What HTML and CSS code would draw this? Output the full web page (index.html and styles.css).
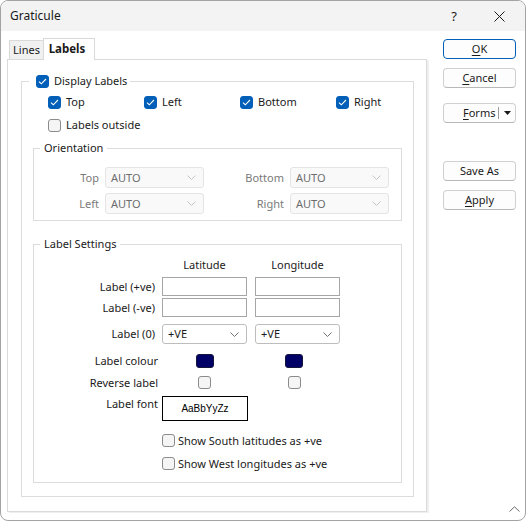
FILE: index.html
```html
<!DOCTYPE html>
<html lang="en">
  <head>
    <meta charset="UTF-8" />
    <meta name="viewport" content="width=device-width, initial-scale=1.0" />
    <title>Graticule</title>
    <link rel="stylesheet" href="styles.css">
  </head>

  <body>
    <div class="dialog">
      <div class="titlebar">
        <span class="title">Graticule</span>
        <span class="help">?</span>
        <span class="close">
          <svg width="11" height="11" viewBox="0 0 11 11"><path d="M0.5 0.5 L10.5 10.5 M10.5 0.5 L0.5 10.5" stroke="#1b1b1b" stroke-width="1" fill="none" /></svg>
        </span>
      </div>

      <div class="main">
        <div class="tabs">
          <div class="tab_strip">
            <span class="tab">Lines</span>
            <span class="tab active">Labels</span>
          </div>

          <div class="panel">
            <fieldset class="group outer">
              <legend>
                <span class="check on"><svg width="9" height="7" viewBox="0 0 9 7"><path d="M1 3.6 L3.3 5.8 L8 1" stroke="#fff" stroke-width="1.1" fill="none" /></svg></span>
                Display Labels
              </legend>

              <div class="opts">
                <label class="opt"><span class="check on"><svg width="9" height="7" viewBox="0 0 9 7"><path d="M1 3.6 L3.3 5.8 L8 1" stroke="#fff" stroke-width="1.1" fill="none" /></svg></span>Top</label>
                <label class="opt"><span class="check on"><svg width="9" height="7" viewBox="0 0 9 7"><path d="M1 3.6 L3.3 5.8 L8 1" stroke="#fff" stroke-width="1.1" fill="none" /></svg></span>Left</label>
                <label class="opt"><span class="check on"><svg width="9" height="7" viewBox="0 0 9 7"><path d="M1 3.6 L3.3 5.8 L8 1" stroke="#fff" stroke-width="1.1" fill="none" /></svg></span>Bottom</label>
                <label class="opt"><span class="check on"><svg width="9" height="7" viewBox="0 0 9 7"><path d="M1 3.6 L3.3 5.8 L8 1" stroke="#fff" stroke-width="1.1" fill="none" /></svg></span>Right</label>
              </div>
              <div class="opts">
                <label class="opt wide"><span class="check"></span>Labels outside</label>
              </div>

              <fieldset class="group inner orient">
                <legend>Orientation</legend>
                <div class="orient_grid">
                  <span class="dim_label">Top</span>
                  <div class="combo off"><span>AUTO</span><svg width="9" height="5" viewBox="0 0 9 5"><path d="M0.5 0.5 L4.5 4.5 L8.5 0.5" stroke="#c4c4c4" fill="none" /></svg></div>
                  <span class="dim_label">Bottom</span>
                  <div class="combo off"><span>AUTO</span><svg width="9" height="5" viewBox="0 0 9 5"><path d="M0.5 0.5 L4.5 4.5 L8.5 0.5" stroke="#c4c4c4" fill="none" /></svg></div>
                  <span class="dim_label">Left</span>
                  <div class="combo off"><span>AUTO</span><svg width="9" height="5" viewBox="0 0 9 5"><path d="M0.5 0.5 L4.5 4.5 L8.5 0.5" stroke="#c4c4c4" fill="none" /></svg></div>
                  <span class="dim_label">Right</span>
                  <div class="combo off"><span>AUTO</span><svg width="9" height="5" viewBox="0 0 9 5"><path d="M0.5 0.5 L4.5 4.5 L8.5 0.5" stroke="#c4c4c4" fill="none" /></svg></div>
                </div>
              </fieldset>

              <fieldset class="group inner settings">
                <legend>Label Settings</legend>

                <div class="ls_row head">
                  <span class="lbl"></span>
                  <span class="cell lat">Latitude</span>
                  <span class="cell lon">Longitude</span>
                </div>
                <div class="ls_row r_pos">
                  <span class="lbl">Label (+ve)</span>
                  <input class="cell lat txt" type="text" />
                  <input class="cell lon txt" type="text" />
                </div>
                <div class="ls_row r_neg">
                  <span class="lbl">Label (-ve)</span>
                  <input class="cell lat txt" type="text" />
                  <input class="cell lon txt" type="text" />
                </div>
                <div class="ls_row r_zero">
                  <span class="lbl">Label (0)</span>
                  <div class="cell lat combo"><span>+VE</span><svg width="9" height="5" viewBox="0 0 9 5"><path d="M0.5 0.5 L4.5 4.5 L8.5 0.5" stroke="#707070" fill="none" /></svg></div>
                  <div class="cell lon combo"><span>+VE</span><svg width="9" height="5" viewBox="0 0 9 5"><path d="M0.5 0.5 L4.5 4.5 L8.5 0.5" stroke="#707070" fill="none" /></svg></div>
                </div>
                <div class="ls_row tight r_colour">
                  <span class="lbl">Label colour</span>
                  <span class="cell lat mid"><span class="swatch"></span></span>
                  <span class="cell lon mid"><span class="swatch"></span></span>
                </div>
                <div class="ls_row tight r_reverse">
                  <span class="lbl">Reverse label</span>
                  <span class="cell lat mid"><span class="check small"></span></span>
                  <span class="cell lon mid"><span class="check small"></span></span>
                </div>
                <div class="ls_row tight r_font">
                  <span class="lbl">Label font</span>
                  <span class="cell lat font_box">AaBbYyZz</span>
                </div>
                <label class="ls_check r_south"><span class="check small"></span>Show South latitudes as +ve</label>
                <label class="ls_check r_west"><span class="check small"></span>Show West longitudes as +ve</label>
              </fieldset>
            </fieldset>
          </div>
        </div>

        <div class="buttons">
          <button class="btn default"><u>O</u>K</button>
          <button class="btn cancel"><u>C</u>ancel</button>
          <div class="btn split">
            <span class="split_text"><u>F</u>orms</span>
            <span class="split_arrow"><svg width="7" height="4" viewBox="0 0 7 4"><path d="M0 0 L7 0 L3.5 4 Z" fill="#1b1b1b" /></svg></span>
          </div>
          <button class="btn save">Save As</button>
          <button class="btn apply"><u>A</u>pply</button>
        </div>
      </div>

      <svg class="grip" width="11" height="6" viewBox="0 0 11 6"><path d="M0.5 5.5 L5.5 0.8 L10.5 5.5" stroke="#6a6a6a" fill="none" /></svg>
    </div>
  </body>
</html>
```

FILE: styles.css
```css
* {
  margin: 0;
  padding: 0;
  box-sizing: border-box;
}

body {
  background: #fff;
  font-family: "Noto Sans", "Open Sans", sans-serif;
  font-size: 11px;
  line-height: 16px;
  color: #1a1a1a;
}

.dialog {
  position: relative;
  width: 526px;
  height: 521px;
  border: 1px solid #a3a3a3;
  border-radius: 8px;
  background: #fff;
  overflow: hidden;
}

/* title bar */
.titlebar {
  display: flex;
  align-items: center;
  height: 30px;
  padding-left: 9px;
  background: #f3f3f3;
}

.title {
  flex: 1;
  font-size: 12px;
}

.help {
  width: 20px;
  text-align: center;
  font-size: 13px;
}

.close {
  display: flex;
  justify-content: center;
  width: 20px;
  margin: 0 16px 0 25px;
}

/* body */
.main {
  display: flex;
}

.tabs {
  margin-left: 6px;
}

.tab_strip {
  display: flex;
  align-items: flex-end;
  height: 28px;
  padding-left: 2px;
}

.tab {
  height: 19px;
  border: 1px solid #d9d9d9;
  border-bottom: none;
  background: #f0f0f0;
  text-align: center;
  line-height: 18px;
}

.tab:first-child {
  width: 35px;
}

.tab.active {
  position: relative;
  z-index: 1;
  width: 52px;
  height: 22px;
  margin-left: -1px;
  margin-bottom: -1px;
  padding-right: 4px;
  background: #fff;
  font-size: 11.5px;
  font-weight: 700;
  line-height: 20px;
}

.panel {
  width: 420px;
  height: 453px;
  padding: 13px 0 0 13px;
  border: 1px solid #dadada;
  background: #fff;
  box-shadow: 2px 1px 0 #efefef;
}

/* group boxes */
.group {
  border: 1px solid #dcdcdc;
  min-width: 0;
}

.group legend {
  height: 16px;
  line-height: 16px;
}

.outer {
  width: 393px;
  padding: 0 0 13px;
}

.outer > legend {
  display: flex;
  align-items: center;
  gap: 5px;
  margin-left: 7px;
  padding: 0 3px 0 7px;
}

.inner {
  margin: 0 11px;
}

.inner > legend {
  margin-left: 6px;
  padding: 0 4px;
}

.check {
  display: inline-flex;
  align-items: center;
  justify-content: center;
  flex: none;
  width: 13px;
  height: 13px;
  border: 1px solid #8b8b8b;
  border-radius: 3px;
  background: #f5f5f5;
}

.check.on {
  border-color: #005fb8;
  background: #005fb8;
}

.check.small {
  width: 13px;
  height: 13px;
}

.opts {
  display: flex;
  height: 20px;
  margin-top: 3px;
  padding-left: 26px;
}

.opt {
  display: flex;
  align-items: center;
  flex: none;
  gap: 5px;
  width: 96px;
}

.opt.wide {
  width: auto;
}

/* orientation */
.orient {
  margin-top: 5px;
  padding: 11px 0 6px;
}

.orient_grid {
  display: grid;
  grid-template-columns: 65px 99px 74px 99px;
  grid-auto-rows: 21px;
  column-gap: 6px;
  row-gap: 5px;
}

.dim_label {
  align-self: center;
  text-align: right;
  color: #7a7a7a;
}

.combo {
  display: flex;
  align-items: center;
  justify-content: space-between;
  height: 20px;
  padding: 0 7px 0 5px;
  border: 1px solid #bdbdbd;
  border-radius: 3px;
  background: #fff;
}

.combo.off {
  height: 21px;
  border-color: #e4e4e4;
  background: #f9f9f9;
  color: #6d6d6d;
}

/* label settings */
.settings {
  margin-top: 15px;
  padding: 0 0 12px;
}

.ls_row {
  display: flex;
  align-items: center;
}

.lbl {
  width: 121px;
  flex: none;
  text-align: right;
}

.cell {
  width: 85px;
  flex: none;
}

.cell.lat {
  margin-left: 7px;
}

.cell.lon {
  margin-left: 8px;
}

.tight .lbl {
  width: 124px;
}

.tight .cell.lat {
  margin-left: 4px;
}

.head {
  height: 16px;
  margin-top: 5px;
}

.head .cell {
  text-align: center;
}

.txt {
  height: 19px;
  border: 1px solid #a6a6a6;
  background: #fff;
  font: inherit;
  outline: none;
}

.r_pos {
  margin-top: 4px;
}

.r_neg {
  margin-top: 2px;
}

.r_zero {
  margin-top: 7px;
}

.mid {
  display: flex;
  justify-content: center;
}

.cell.lon.mid {
  padding-right: 7px;
}

.r_colour {
  height: 14px;
  margin-top: 10px;
}

.swatch {
  width: 18px;
  height: 14px;
  border: 1px solid #14143c;
  border-radius: 3px;
  background: #000066;
}

.r_reverse {
  height: 13px;
  margin-top: 8px;
}

.r_font {
  align-items: flex-start;
  height: 25px;
  margin-top: 7px;
}

.font_box {
  width: 86px;
  height: 25px;
  border: 1px solid #000;
  background: #fff;
  font-family: "Liberation Sans", Arial, sans-serif;
  font-size: 10px;
  line-height: 23px;
  text-align: center;
  color: #000;
}

.ls_check {
  display: flex;
  align-items: center;
  gap: 3px;
  height: 13px;
  padding-left: 128px;
}

.r_south {
  margin-top: 13px;
}

.r_west {
  margin-top: 10px;
}

/* buttons */
.buttons {
  display: flex;
  flex-direction: column;
  width: 73px;
  margin-left: 16px;
  padding-top: 8px;
}

.btn {
  height: 20px;
  border: 1px solid #d0d0d0;
  border-bottom-color: #b8b8b8;
  border-radius: 4px;
  background: #fdfdfd;
  font: inherit;
  color: #1a1a1a;
}

.btn u {
  text-decoration-thickness: 1px;
  text-underline-offset: 2px;
}

.btn.default {
  border: 1px solid #005fb8;
}

.cancel,
.apply {
  margin-top: 9px;
}

.split {
  display: flex;
  align-items: center;
  margin-top: 15px;
}

.split_text {
  flex: 1;
  padding-left: 19px;
}

.split_arrow {
  display: flex;
  align-items: center;
  justify-content: center;
  width: 17px;
  height: 12px;
  border-left: 1px solid #9a9a9a;
}

.save {
  margin-top: 38px;
}

.grip {
  position: absolute;
  right: 5px;
  bottom: 8px;
}
```
